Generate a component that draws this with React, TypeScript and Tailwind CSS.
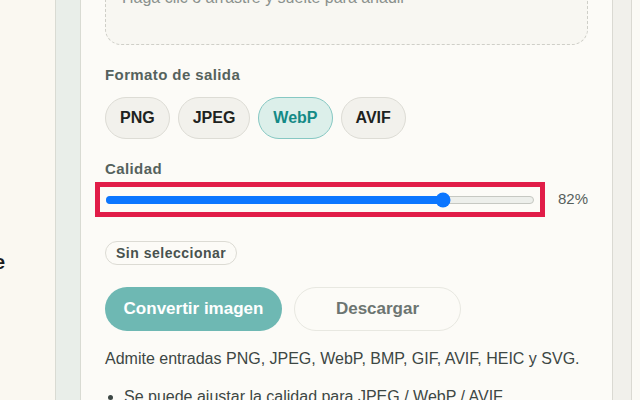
import React, { useState } from 'react';

const formats = ['PNG', 'JPEG', 'WebP', 'AVIF'];

export default function App() {
  const [format, setFormat] = useState('WebP');
  const [quality] = useState(82);
  // range 10-100
  const frac = (quality - 10) / 90;

  return (
    <div
      className="flex h-[400px] w-[640px] overflow-hidden bg-[#faf8f1] text-[#1f2523]"
      style={{ fontFamily: '"Liberation Sans", Arial, sans-serif' }}
    >
      {/* Sidebar (clipped) */}
      <div className="w-[55px] shrink-0 overflow-hidden">
        <p className="-ml-[6px] mt-[248px] text-[20px] leading-[28px] font-bold text-[#1c1c1c]">e</p>
      </div>
      <div className="w-[26px] shrink-0 border-x border-[#d9dbd3] bg-[#e9eee9]" />

      {/* Main card */}
      <main className="w-[531px] shrink-0 bg-[#fcfbf7] px-6">
        <div className="-mt-[40px] h-[85px] rounded-2xl border border-dashed border-[#cfcfc8] bg-[#f8f7f2] pl-[16px] pt-[27px]">
          <p className="text-[16px] leading-[20px] text-[#8a918d]">Haga clic o arrastre y suelte para añadir</p>
        </div>

        <h3 className="mt-[18px] text-[15px] leading-[24px] font-bold tracking-[0.4px] text-[#55625d]">
          Formato de salida
        </h3>
        <div className="mt-[10px] flex gap-[8px]">
          {formats.map((f) => (
            <button
              key={f}
              onClick={() => setFormat(f)}
              className={`h-[42px] rounded-full border px-[14px] text-[16px] font-bold ${
                format === f
                  ? 'border-[#86c8c3] bg-[#dcefea] text-[#138a86]'
                  : 'border-[#dddcd5] bg-[#f2f1ec] text-[#1d2220]'
              }`}
            >
              {f}
            </button>
          ))}
        </div>

        <h3 className="mt-[18px] text-[15px] leading-[24px] font-bold tracking-[0.4px] text-[#55625d]">
          Calidad
        </h3>
        <div className="mt-[1px] flex items-center">
          <div className="-ml-[10px] flex h-[35px] flex-1 items-center border-[5px] border-[#e11d48] px-[6px]">
            <div className="relative h-[8px] w-full rounded-full border border-[#c6c8c2] bg-[#edefeb]">
              <div
                className="absolute -left-px -top-px h-[8px] rounded-l-full bg-[#0b76ff]"
                style={{ width: `calc(8px + (100% - 16px) * ${frac})` }}
              />
              <div
                className="absolute top-1/2 h-[15px] w-[15px] -translate-x-1/2 -translate-y-1/2 rounded-full bg-[#0b76ff]"
                style={{ left: `calc(8px + (100% - 16px) * ${frac})` }}
              />
            </div>
          </div>
          <span className="ml-[13px] text-[15px] text-[#56605c]">{quality}%</span>
        </div>

        <div className="mt-[24px] flex">
          <span className="flex h-[24px] items-center rounded-full border border-[#dcdbd4] px-[10px] text-[14px] font-bold tracking-[0.5px] text-[#48524e]">
            Sin seleccionar
          </span>
        </div>

        <div className="mt-[22px] flex gap-[12px]">
          <button className="h-[44px] w-[177px] rounded-full bg-[#6eb8b3] text-[17px] font-bold text-white">
            Convertir imagen
          </button>
          <button className="h-[44px] w-[167px] rounded-full border border-[#e8e8e1] bg-[#fcfbf7] text-[17px] font-bold text-[#6c7571]">
            Descargar
          </button>
        </div>

        <p className="mt-[16px] text-[16px] leading-[24px] text-[#3d4744]">
          Admite entradas PNG, JPEG, WebP, BMP, GIF, AVIF, HEIC y SVG.
        </p>
        <ul className="mt-[14px] list-disc pl-[19px] text-[16px] leading-[24px] text-[#3d4744]">
          <li>Se puede ajustar la calidad para JPEG / WebP / AVIF.</li>
        </ul>
      </main>

      <div className="w-[20px] shrink-0 border-x border-[#dad9d2] bg-[#f1f0eb]" />
      <div className="flex-1 bg-[#fbfaf5]" />
    </div>
  );
}
